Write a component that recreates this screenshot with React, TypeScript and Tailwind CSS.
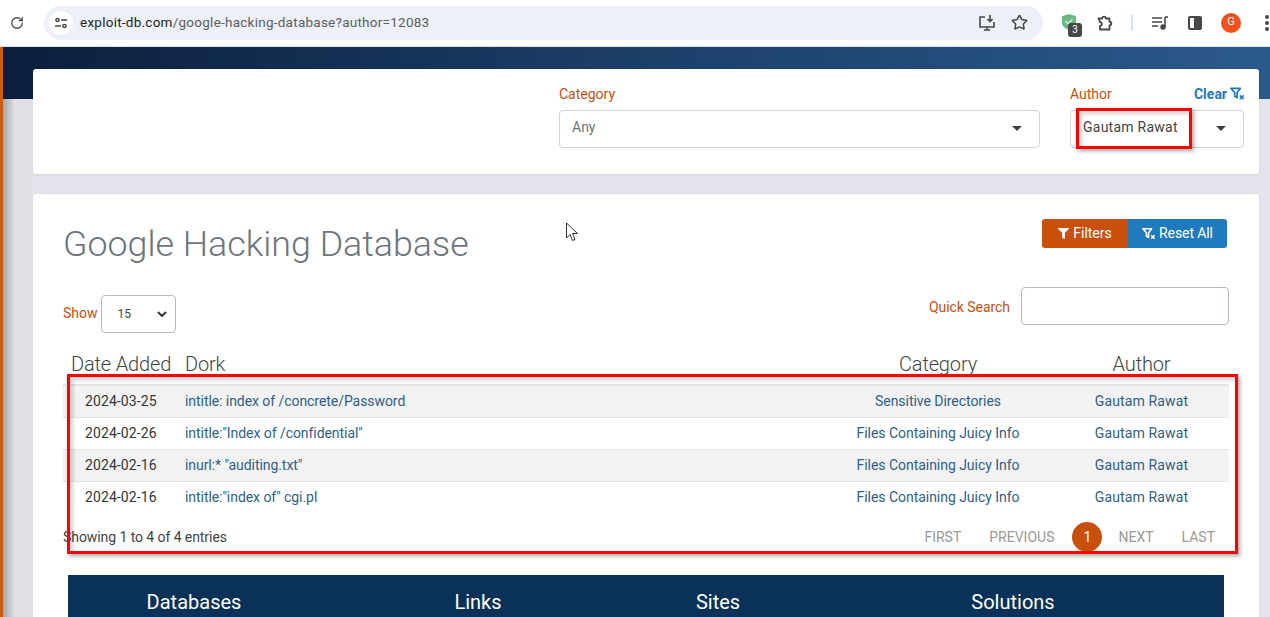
import { FaFilter } from 'react-icons/fa';
import { RotateCw, Star } from 'lucide-react';

const rows = [
  { date: '2024-03-25', dork: 'intitle: index of /concrete/Password', category: 'Sensitive Directories' },
  { date: '2024-02-26', dork: 'intitle:"Index of /confidential"', category: 'Files Containing Juicy Info' },
  { date: '2024-02-16', dork: 'inurl:* "auditing.txt"', category: 'Files Containing Juicy Info' },
  { date: '2024-02-16', dork: 'intitle:"index of" cgi.pl', category: 'Files Containing Juicy Info' },
];

function ClearFilterIcon({ className }: { className?: string }) {
  return (
    <svg viewBox="0 0 16 14" className={className} fill="none" stroke="currentColor">
      <path d="M1 1h10L7.500 5.500V11L5 9.500v-4z" strokeWidth="1.800" strokeLinejoin="round" />
      <path d="M10.500 8.500l4 4M14.500 8.500l-4 4" strokeWidth="1.700" />
    </svg>
  );
}

function Caret() {
  return <div className="mt-[3px] h-0 w-0 border-x-[5px] border-t-[5px] border-x-transparent border-t-[#3d4046]" />;
}

function BrowserBar() {
  return (
    <div className="flex h-[47px] items-center border-b border-[#dfe1e5] bg-white pb-[1px]">
      <RotateCw className="ml-[10px] h-[14px] w-[14px] text-[#474747]" strokeWidth={2.2} />
      <div className="ml-[20px] flex h-[34px] w-[999px] items-center rounded-full bg-[#edf0f8] pl-[5px] pr-[15px]">
        <div className="flex h-[24px] w-[24px] items-center justify-center rounded-full bg-white">
          <svg viewBox="0 0 14 12" className="h-[12px] w-[14px]" fill="none" stroke="#474747" strokeWidth="1.500">
            <circle cx="3.500" cy="3" r="1.600" />
            <path d="M7 3h6M1 9h6" />
            <circle cx="10.500" cy="9" r="1.600" />
          </svg>
        </div>
        <span className="ml-[7px] text-[13.5px] tracking-[0.25px] text-[#5b5e63]">
          <span className="text-[#1f1f1f]">exploit-db.com</span>/google-hacking-database?author=12083
        </span>
        <svg viewBox="0 0 18 18" className="ml-auto h-[18px] w-[18px]" fill="none" stroke="#474747" strokeWidth="1.600">
          <path d="M7 3H2v10h14V8M6 16h6M9 13v3" />
          <path d="M12 1v6M9.500 5l2.500 2.500L14.500 5" />
        </svg>
        <Star className="ml-[15px] h-[17px] w-[17px] text-[#474747]" strokeWidth={2.2} />
      </div>
      <div className="relative ml-[18px] h-[20px] w-[20px]">
        <svg viewBox="0 0 18 20" className="h-[18px] w-[16px]">
          <path d="M9 1l8 2.500v7c0 4-3.500 7-8 8.500-4.500-1.500-8-4.500-8-8.500v-7z" fill="#66bb82" />
          <path d="M5 9l3 3 5-5" fill="none" stroke="#d5eedd" strokeWidth="1.600" />
        </svg>
        <span className="absolute left-[7px] top-[10px] flex h-[14px] w-[14px] items-center justify-center rounded-[3px] bg-[#474747] text-[10px] text-white">
          3
        </span>
      </div>
      <svg viewBox="0 0 16 16" className="ml-[16px] h-[16px] w-[16px]" fill="none" stroke="#474747" strokeWidth="1.800" strokeLinejoin="round">
        <path d="M1.500 3.500h3.700a1.800 1.800 0 0 1 3.600 0h3.700v3.200a1.800 1.800 0 0 1 0 3.600v4.200H3v-3.700a1.800 1.800 0 0 0 0-3.600z" />
      </svg>
      <div className="ml-[18px] h-[16px] w-[2px] bg-[#d3e3fd]" />
      <svg viewBox="0 0 16 14" className="ml-[19px] h-[14px] w-[16px]" fill="none" stroke="#474747" strokeWidth="1.500">
        <path d="M0 2h10M0 6h10M0 10h6M13 1v10" />
        <circle cx="11" cy="11" r="2" fill="#474747" />
        <path d="M13 1h3" />
      </svg>
      <div className="ml-[20px] flex h-[14px] w-[14px] rounded-[2px] border-2 border-[#474747]">
        <div className="ml-auto w-[6px] bg-[#474747]" />
      </div>
      <div className="ml-[19px] flex h-[20px] w-[20px] items-center justify-center rounded-full bg-[#f4511e] text-[11px] text-white">
        G
      </div>
      <div className="ml-[24px] flex flex-col gap-[2px]">
        <div className="h-[4px] w-[4px] rounded-full bg-[#474747]" />
        <div className="h-[4px] w-[4px] rounded-full bg-[#474747]" />
        <div className="h-[4px] w-[4px] rounded-full bg-[#474747]" />
      </div>
    </div>
  );
}

function FilterCard() {
  return (
    <div className="relative flex h-[105px] justify-end gap-[30px] rounded-[3px] bg-white pr-[15px] pt-[15px] shadow-[0_1px_4px_rgba(0,0,0,0.06)]">
      <div className="w-[481px]">
        <div className="h-[26px] text-[14px] leading-[20px] text-[#c9500c]">Category</div>
        <div className="flex h-[38px] items-center justify-between rounded-[4px] border border-[#ced4da] pb-[4px] pl-[12px] pr-[17px] text-[14px] text-[#6c757d]">
          Any
          <Caret />
        </div>
      </div>
      <div className="relative w-[174px]">
        <div className="flex h-[26px] justify-between">
          <span className="text-[14px] leading-[20px] text-[#c9500c]">Author</span>
          <span className="-mr-[1px] flex h-[20px] items-center gap-[3px] text-[14px] font-bold text-[#1f7bbd]">
            Clear
            <ClearFilterIcon className="h-[14px] w-[15px]" />
          </span>
        </div>
        <div className="flex h-[38px] items-center justify-between rounded-[4px] border border-[#ced4da] pb-[4px] pl-[12px] pr-[17px] text-[14px] tracking-[0.25px] text-[#3f4349]">
          Gautam Rawat
          <Caret />
        </div>
        {/* annotation drawn over the screenshot */}
        <div className="absolute left-[6px] top-[24px] h-[41px] w-[116px] border-[3px] border-[#f00] shadow-[2px_2px_4px_rgba(0,0,0,0.35),inset_3px_3px_4px_rgba(0,0,0,0.18)]" />
      </div>
    </div>
  );
}

function ResultsTable() {
  return (
    <div className="relative mt-[16px] mr-[30px]">
      <div className="flex h-[27px] items-end text-[20px] font-light leading-[24px] tracking-[-0.15px] text-[#3f4349]">
        <div className="w-[122px] pl-[8px] whitespace-nowrap">Date Added</div>
        <div className="w-[637px]">Dork</div>
        <div className="w-[232px] text-center">Category</div>
        <div className="w-[175px] text-center">Author</div>
      </div>
      <div className="mt-[8px] border-t-2 border-[#e4e5e8]">
        {rows.map((row, i) => (
          <div
            key={i}
            className={`flex h-[32px] items-center border-b text-[14px] ${i % 2 === 0 ? 'bg-[#f2f2f2]' : 'bg-white'} ${i === 3 ? 'border-transparent' : 'border-[#e4e5e8]'}`}
          >
            <div className="w-[122px] pl-[22px] tracking-[0.1px] text-[#33363b]">{row.date}</div>
            <div className="w-[637px] tracking-[-0.06px] text-[#2f5f8a]">{row.dork}</div>
            <div className="w-[232px] text-center tracking-[-0.04px] text-[#2f5f8a]">{row.category}</div>
            <div className="w-[175px] text-center tracking-[0.15px] text-[#2f5f8a]">Gautam Rawat</div>
          </div>
        ))}
      </div>
      <div className="mt-[7px] flex h-[32px] items-center text-[14px] text-[#3f4349]">
        <span className="tracking-[-0.07px]">Showing 1 to 4 of 4 entries</span>
        <div className="ml-auto flex items-center text-[#9a9a9a]">
          <span className="mr-[28px]">FIRST</span>
          <span className="mr-[18px]">PREVIOUS</span>
          <span className="flex h-[30px] w-[30px] items-center justify-center rounded-full bg-[#c9500c] text-white">1</span>
          <span className="ml-[16px]">NEXT</span>
          <span className="ml-[28px] mr-[14px]">LAST</span>
        </div>
      </div>
      {/* annotation drawn over the screenshot */}
      <div className="absolute left-[4px] top-[25px] h-[180px] w-[1171px] border-[3px] border-[#f00] shadow-[2px_2px_4px_rgba(0,0,0,0.35),inset_3px_3px_4px_rgba(0,0,0,0.18)]" />
    </div>
  );
}

function FooterBand() {
  return (
    <div className="ml-[5px] mt-[22px] flex h-[60px] w-[1156px] bg-[#0a3158] pt-[14px] text-center text-[20px] leading-[26px] text-white">
      <div className="w-[252px] shrink-0">Databases</div>
      <div className="w-[316px] shrink-0">Links</div>
      <div className="w-[164px] shrink-0">Sites</div>
      <div className="w-[426px] shrink-0">Solutions</div>
    </div>
  );
}

export default function App() {
  return (
    <div
      className="relative h-[617px] w-[1270px] overflow-hidden bg-[#e4e5ec] text-[14px]"
      style={{ fontFamily: 'Roboto, "Liberation Sans", sans-serif' }}
    >
      <BrowserBar />
      <div className="h-[52px] bg-gradient-to-r from-[#0a1f3c] via-[#1c3f69] to-[#2a5a8c]" />
      <div className="relative -mt-[52px] flex">
        <div className="mt-[52px] h-[600px] w-[33px] shrink-0 bg-gradient-to-r from-[#a6a7ab] from-[10%] to-[#e0e1e6] to-[45%]" />
        <div className="absolute left-0 top-0 h-[580px] w-[3px] bg-[#cf5a12]" />
        <div className="relative w-[1226px] pt-[22px]">
          <FilterCard />
          <div className="mt-[20px] rounded-[3px] bg-white pl-[30px] pt-[25px] shadow-[0_1px_4px_rgba(0,0,0,0.06)]">
            <div className="flex h-[68px] items-start justify-between pr-[32px]">
              <h1 className="mt-[4px] text-[35.8px] font-light leading-[43px] text-[#6c757d]">Google Hacking Database</h1>
              <div className="flex h-[29px] text-[14px] text-white">
                <div className="flex w-[86px] items-center justify-center gap-[4px] rounded-l-[3px] bg-[#c9500c]">
                  <FaFilter className="h-[11px] w-[11px]" />
                  Filters
                </div>
                <div className="flex w-[99px] items-center justify-center gap-[3px] rounded-r-[3px] bg-[#1f7bbd] tracking-[-0.1px]">
                  <ClearFilterIcon className="h-[14px] w-[14px]" />
                  Reset All
                </div>
              </div>
            </div>
            <div className="flex h-[46px] items-start justify-between pr-[30px]">
              <div className="mt-[8px] flex items-center gap-[3px]">
                <span className="-mt-[1px] text-[#c9500c]">Show</span>
                <div className="flex h-[38px] w-[75px] items-center justify-between rounded-[4px] border border-[#b4bac2] pl-[16px] pr-[8px] text-[12px] text-[#3f4349]">
                  15
                  <svg viewBox="0 0 10 6" className="h-[6px] w-[10px]" fill="none" stroke="#33363b" strokeWidth="2">
                    <path d="M1 1l4 4 4-4" />
                  </svg>
                </div>
              </div>
              <div className="flex items-center gap-[11px]">
                <span className="mt-[2px] tracking-[-0.05px] text-[#c9500c]">Quick Search</span>
                <div className="h-[38px] w-[208px] rounded-[4px] border border-[#b4bac2]" />
              </div>
            </div>
            <ResultsTable />
            <FooterBand />
          </div>
        </div>
      </div>
      {/* mouse pointer captured in the screenshot */}
      <svg viewBox="0 0 14 20" className="absolute left-[565px] top-[222px] h-[20px] w-[14px]" fill="#fff" stroke="#333" strokeWidth="1">
        <path d="M1.500 1v15l3.500-3.500 2.500 6 2.500-1-2.500-6h5z" />
      </svg>
    </div>
  );
}
